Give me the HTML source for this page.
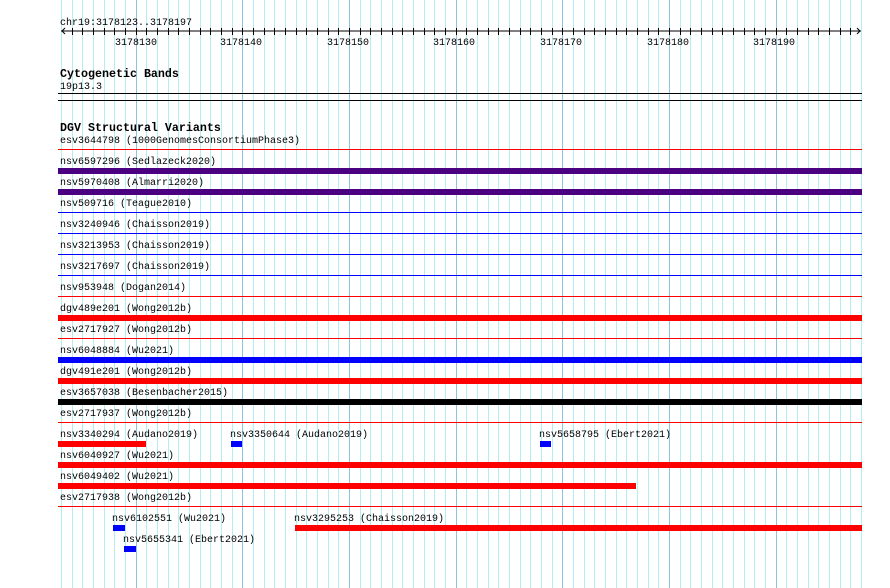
<!DOCTYPE html>
<html><head><meta charset="utf-8"><style>
html,body{margin:0;padding:0;background:#fff;width:890px;height:588px;overflow:hidden}
svg{display:block}
text{font-family:"Liberation Mono",monospace;font-size:10px;fill:#000}
.h{font-weight:bold;font-size:11.67px}
</style></head><body>
<svg id="s" width="890" height="588" xmlns="http://www.w3.org/2000/svg">
<g id="grid"></g>
<g id="ticks"></g>
<line x1="61" y1="31" x2="861" y2="31" stroke="#000" stroke-width="1"/>
<polyline points="65,28 62,31 65,34" fill="none" stroke="#000"/>
<polyline points="857,28 860,31 857,34" fill="none" stroke="#000"/>
<text x="60" y="25">chr19:3178123..3178197</text>
<text x="115" y="45">3178130</text>
<text x="220" y="45">3178140</text>
<text x="327" y="45">3178150</text>
<text x="433" y="45">3178160</text>
<text x="540" y="45">3178170</text>
<text x="647" y="45">3178180</text>
<text x="753" y="45">3178190</text>
<text class="h" x="60" y="77">Cytogenetic Bands</text>
<text x="60" y="89">19p13.3</text>
<rect x="58" y="93" width="804" height="1" fill="#000"/>
<rect x="58" y="100" width="804" height="1" fill="#000"/>
<text class="h" x="60" y="131">DGV Structural Variants</text>
<g transform="translate(0,-1)">
<text x="60" y="144">esv3644798 (1000GenomesConsortiumPhase3)</text>
<text x="60" y="165">nsv6597296 (Sedlazeck2020)</text>
<text x="60" y="186">nsv5970408 (Almarri2020)</text>
<text x="60" y="207">nsv509716 (Teague2010)</text>
<text x="60" y="228">nsv3240946 (Chaisson2019)</text>
<text x="60" y="249">nsv3213953 (Chaisson2019)</text>
<text x="60" y="270">nsv3217697 (Chaisson2019)</text>
<text x="60" y="291">nsv953948 (Dogan2014)</text>
<text x="60" y="312">dgv489e201 (Wong2012b)</text>
<text x="60" y="333">esv2717927 (Wong2012b)</text>
<text x="60" y="354">nsv6048884 (Wu2021)</text>
<text x="60" y="375">dgv491e201 (Wong2012b)</text>
<text x="60" y="396">esv3657038 (Besenbacher2015)</text>
<text x="60" y="417">esv2717937 (Wong2012b)</text>
<text x="60" y="438">nsv3340294 (Audano2019)</text>
<text x="230" y="438">nsv3350644 (Audano2019)</text>
<text x="539" y="438">nsv5658795 (Ebert2021)</text>
<text x="60" y="459">nsv6040927 (Wu2021)</text>
<text x="60" y="480">nsv6049402 (Wu2021)</text>
<text x="60" y="501">esv2717938 (Wong2012b)</text>
<text x="112" y="522">nsv6102551 (Wu2021)</text>
<text x="294" y="522">nsv3295253 (Chaisson2019)</text>
<text x="123" y="543">nsv5655341 (Ebert2021)</text>
</g>
<rect x="58" y="149" width="804" height="1" fill="#f00"/>
<rect x="58" y="168" width="804" height="6" fill="#4b0082"/>
<rect x="58" y="189" width="804" height="6" fill="#4b0082"/>
<rect x="58" y="212" width="804" height="1" fill="#00f"/>
<rect x="58" y="233" width="804" height="1" fill="#00f"/>
<rect x="58" y="254" width="804" height="1" fill="#00f"/>
<rect x="58" y="275" width="804" height="1" fill="#00f"/>
<rect x="58" y="296" width="804" height="1" fill="#f00"/>
<rect x="58" y="315" width="804" height="6" fill="#f00"/>
<rect x="58" y="338" width="804" height="1" fill="#f00"/>
<rect x="58" y="357" width="804" height="6" fill="#00f"/>
<rect x="58" y="378" width="804" height="6" fill="#f00"/>
<rect x="58" y="399" width="804" height="6" fill="#000"/>
<rect x="58" y="422" width="804" height="1" fill="#f00"/>
<rect x="58" y="441" width="88" height="6" fill="#f00"/>
<rect x="231" y="441" width="11" height="6" fill="#00f"/>
<rect x="540" y="441" width="11" height="6" fill="#00f"/>
<rect x="58" y="462" width="804" height="6" fill="#f00"/>
<rect x="58" y="483" width="578" height="6" fill="#f00"/>
<rect x="58" y="506" width="804" height="1" fill="#f00"/>
<rect x="113" y="525" width="12" height="6" fill="#00f"/>
<rect x="295" y="525" width="567" height="6" fill="#f00"/>
<rect x="124" y="546" width="12" height="6" fill="#00f"/>
</svg>
<script>
var ns="http://www.w3.org/2000/svg",g=document.getElementById("grid"),t=document.getElementById("ticks");
for(var k=0;k<=75;k++){var x=Math.round(61+k*10.6667)+0.5;var major=((k+3)%10==0);
var l=document.createElementNS(ns,"line");l.setAttribute("x1",x);l.setAttribute("x2",x);l.setAttribute("y1",0);l.setAttribute("y2",588);
l.setAttribute("stroke",major?"#8cc4e4":"#b4eef2");l.setAttribute("stroke-width",1);g.appendChild(l);
if(k>0&&k<75){var m=document.createElementNS(ns,"line");m.setAttribute("x1",x);m.setAttribute("x2",x);m.setAttribute("y1",28);m.setAttribute("y2",35);m.setAttribute("stroke","#000");t.appendChild(m);}}
</script>
</body></html>
